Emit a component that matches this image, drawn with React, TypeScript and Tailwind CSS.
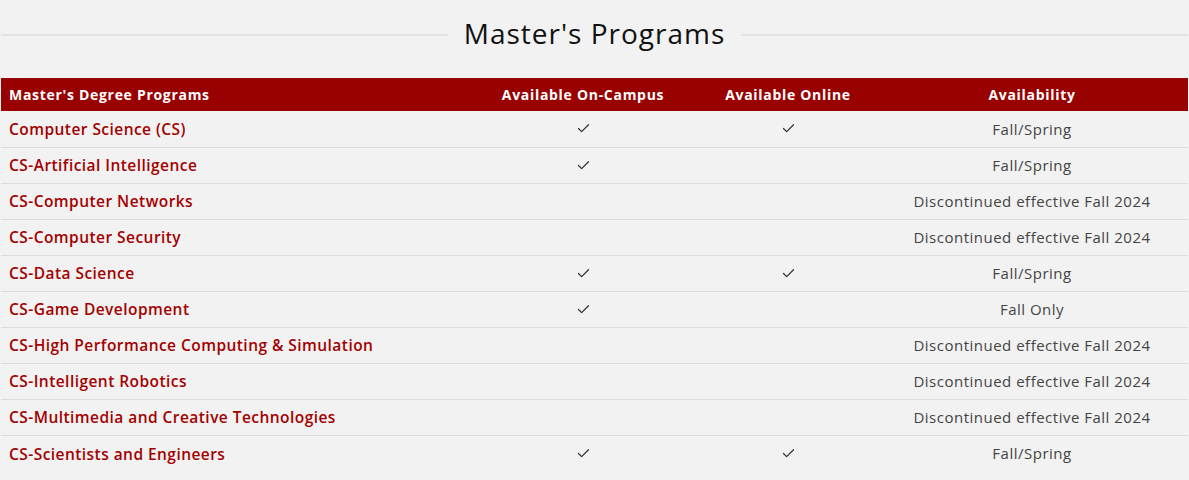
import { Check } from "lucide-react"

interface Program {
    name: string
    campus: boolean
    online: boolean
    availability: string
}

const GONE = "Discontinued effective Fall 2024"

const PROGRAMS: Program[] = [
    { name: "Computer Science (CS)", campus: true, online: true, availability: "Fall/Spring" },
    { name: "CS-Artificial Intelligence", campus: true, online: false, availability: "Fall/Spring" },
    { name: "CS-Computer Networks", campus: false, online: false, availability: GONE },
    { name: "CS-Computer Security", campus: false, online: false, availability: GONE },
    { name: "CS-Data Science", campus: true, online: true, availability: "Fall/Spring" },
    { name: "CS-Game Development", campus: true, online: false, availability: "Fall Only" },
    { name: "CS-High Performance Computing & Simulation", campus: false, online: false, availability: GONE },
    { name: "CS-Intelligent Robotics", campus: false, online: false, availability: GONE },
    { name: "CS-Multimedia and Creative Technologies", campus: false, online: false, availability: GONE },
    { name: "CS-Scientists and Engineers", campus: true, online: true, availability: "Fall/Spring" },
]

const Tick = () => (
    <Check className="mx-auto h-[15px] w-[15px] text-[#333]" strokeWidth={2} />
)

export default function App() {
    return (
        <div className="min-h-[480px] bg-[#f2f2f2] pt-[14px] font-['Open_Sans',sans-serif]">
            <div className="flex items-center gap-4 px-[1px]">
                <div className="mt-[3px] h-[2px] flex-1 bg-[#e3e3e3]" />
                <h2 className="text-[28px] font-medium leading-[38px] tracking-[1px] text-[#111]">
                    Master's Programs
                </h2>
                <div className="mt-[3px] h-[2px] flex-1 bg-[#e3e3e3]" />
            </div>

            <table className="mx-[1px] mt-[26px] w-[1187px] table-fixed border-collapse">
                <colgroup>
                    <col className="w-[465px]" />
                    <col className="w-[234px]" />
                    <col className="w-[176px]" />
                    <col className="w-[312px]" />
                </colgroup>
                <thead>
                    <tr className="h-[33px] bg-[#990000] text-[14px] font-extrabold tracking-[0.7px] text-white">
                        <th className="pl-2 text-left">Master's Degree Programs</th>
                        <th className="text-center">Available On-Campus</th>
                        <th className="text-center">Available Online</th>
                        <th className="text-center">Availability</th>
                    </tr>
                </thead>
                <tbody>
                    {PROGRAMS.map((p, i) => (
                        <tr
                            key={p.name}
                            className={`h-[36px] ${i < PROGRAMS.length - 1 ? "border-b border-[#dcdcdc]" : ""}`}
                        >
                            <td className="pl-2 pt-[2px] text-[15.5px] font-semibold tracking-[0.45px] text-[#a30000]">
                                {p.name}
                            </td>
                            <td>{p.campus && <Tick />}</td>
                            <td>{p.online && <Tick />}</td>
                            <td className="text-center text-[15px] tracking-[0.5px] text-[#444]">
                                {p.availability}
                            </td>
                        </tr>
                    ))}
                </tbody>
            </table>
        </div>
    )
}
